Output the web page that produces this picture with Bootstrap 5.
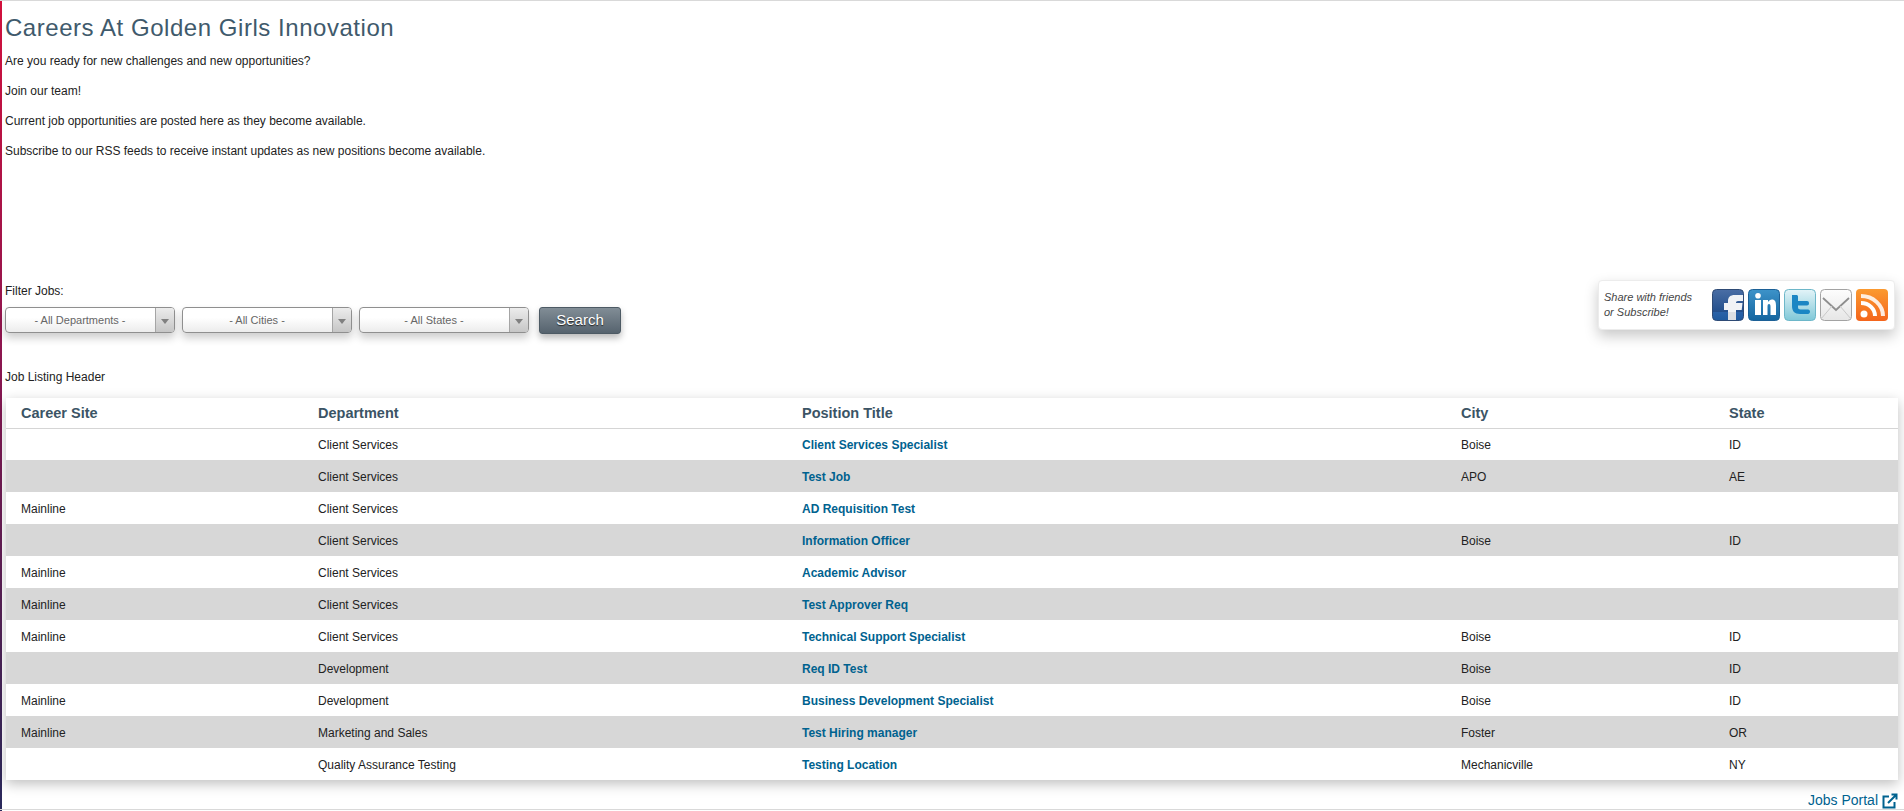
<!DOCTYPE html>
<html lang="en">
<head>
  <meta charset="UTF-8">
  <title>Careers At Golden Girls Innovation</title>
  <link rel="stylesheet" href="https://cdn.jsdelivr.net/npm/bootstrap@5.3.3/dist/css/bootstrap.min.css">
  <style>
    html, body { height: 100%; }
    body {
      font-family: "Liberation Sans", Arial, sans-serif;
      font-size: 12px;
      line-height: 15px;
      color: #222;
      background: #fff;
      overflow: hidden;
    }
    .page-frame {
      height: 811px;
      padding: 1px 5px 0 7px;
      border-top: 1px solid #d9d9d9;
      background: linear-gradient(#d2103c, #8a1650 45%, #2a2a5c) no-repeat left top / 2px 100%;
      position: relative;
    }
    .page-title {
      font-size: 24px;
      line-height: 30px;
      font-weight: 400;
      color: #3f5a6c;
      letter-spacing: .54px;
      margin: 11px 0 0 -2px;
    }
    .intro { margin: 11px 0 0 -2px; }
    .intro p { margin: 0 0 15px; }
    .filter-area { margin: 121px 0 0 -2px; height: 54px; }
    .filter-label { margin: 4px 0 8px; line-height: 15px; }
    .drop {
      width: 170px;
      height: 26px;
      border: 1px solid #8f8f8f;
      border-radius: 4px;
      background: linear-gradient(#fff 40%, #ececec);
      box-shadow: 0 5px 9px rgba(0, 0, 0, .2);
      color: #666;
      font-size: 11px;
    }
    .drop-text { flex: 1; text-align: center; padding-right: 1px; }
    .drop-arrow {
      width: 19px;
      border-left: 1px solid #a5a5a5;
      background: linear-gradient(#ececec, #c6c6c6);
      border-radius: 0 3px 3px 0;
    }
    .drop-arrow::after {
      content: "";
      border-left: 4px solid transparent;
      border-right: 4px solid transparent;
      border-top: 5px solid #808080;
      margin-top: 2px;
    }
    .drop-gap { gap: 7px; }
    .search-btn {
      width: 82px;
      height: 27px;
      margin-left: 3px;
      padding: 0;
      border: 1px solid #4d5a64;
      border-radius: 3px;
      background: linear-gradient(#818d96, #56636e);
      box-shadow: 0 4px 7px rgba(0, 0, 0, .28);
      color: #fff;
      font-size: 15px;
      text-shadow: 0 1px 1px #222;
    }
    .share-box {
      width: 297px;
      height: 50px;
      margin-right: 4px;
      padding-left: 5px;
      padding-right: 6px;
      background: #fff;
      border: 1px solid #ececec;
      border-radius: 4px;
      box-shadow: 0 6px 14px rgba(0, 0, 0, .22);
    }
    .share-text { font-size: 11px; line-height: 15px; font-style: italic; color: #444; }
    .share-icons { gap: 4px; }
    .share-icons svg { display: block; }
    .listing-head { margin: 36px 0 13px -2px; line-height: 15px; }
    .job-wrap {
      margin-left: -1px;
      width: 1892px;
      box-shadow: 0 4px 12px rgba(0, 0, 0, .25);
    }
    .job-table {
      table-layout: fixed;
      margin: 0;
      color: #222;
      font-size: 12px;
      --bs-table-bg: transparent;
    }
    .job-table th, .job-table td { padding: 2px 16px 0; border: 0; vertical-align: middle; }
    .job-table th:first-child, .job-table td:first-child { padding-left: 15px; }
    .job-table thead th {
      height: 30px;
      font-size: 14.5px;
      font-weight: 700;
      color: #3b5465;
      border-bottom: 1px solid #d5d5d5;
    }
    .job-table tbody td { height: 32px; }
    .job-table tbody tr:nth-child(even) td { background: #d7d7d7; }
    .job-table a { color: #00628f; font-weight: 700; text-decoration: none; }
    .col-site { width: 296px; }
    .col-dept { width: 484px; }
    .col-title { width: 659px; }
    .col-city { width: 268px; }
    .portal-row { height: 41px; padding-right: 1px; }
    .portal-link { color: #00628f; font-size: 14px; text-decoration: none; gap: 4px; }
    .foot-rule {
      position: absolute;
      left: 0; right: 0;
      top: 808px;
      border-top: 1px solid #d9d9d9;
    }
  </style>
</head>
<body>
  <div class="page-frame">
    <h1 class="page-title">Careers At Golden Girls Innovation</h1>
    <div class="intro">
      <p>Are you ready for new challenges and new opportunities?</p>
      <p>Join our team!</p>
      <p>Current job opportunities are posted here as they become available.</p>
      <p>Subscribe to our RSS feeds to receive instant updates as new positions become available.</p>
    </div>

    <div class="filter-area d-flex justify-content-between">
      <div>
        <div class="filter-label">Filter Jobs:</div>
        <div class="d-flex align-items-start drop-gap">
          <div class="drop d-flex align-items-stretch"><span class="drop-text d-flex align-items-center justify-content-center">- All Departments -</span><span class="drop-arrow d-flex align-items-center justify-content-center"></span></div>
          <div class="drop d-flex align-items-stretch"><span class="drop-text d-flex align-items-center justify-content-center">- All Cities -</span><span class="drop-arrow d-flex align-items-center justify-content-center"></span></div>
          <div class="drop d-flex align-items-stretch"><span class="drop-text d-flex align-items-center justify-content-center">- All States -</span><span class="drop-arrow d-flex align-items-center justify-content-center"></span></div>
          <button type="button" class="btn search-btn">Search</button>
        </div>
      </div>

      <div class="share-box d-flex align-items-center justify-content-between">
        <div class="share-text">Share with friends<br>or Subscribe!</div>
        <div class="share-icons d-flex">
          <!-- facebook -->
          <svg width="32" height="32" viewBox="0 0 32 32">
            <defs><linearGradient id="fb" x1="0" y1="0" x2="0" y2="1"><stop offset="0" stop-color="#4a6ea5"/><stop offset=".72" stop-color="#234f8c"/><stop offset=".73" stop-color="#2a62a8"/><stop offset="1" stop-color="#1f5a9e"/></linearGradient></defs>
            <rect x=".5" y=".5" width="31" height="31" rx="4" fill="url(#fb)" stroke="#2e4a75"/>
            <path d="M16 31V21h-4v-7h4v-2c0-4 2.500-6 6.500-6H31v6h-5c-1.500 0-2 .7-2 2h6.500l-.8 7H24v10z" fill="#f1f3f6"/>
            <rect x="16" y="23" width="8" height="8" fill="#dcdfe4"/>
          </svg>
          <!-- linkedin -->
          <svg width="32" height="32" viewBox="0 0 32 32">
            <defs><linearGradient id="li" x1="0" y1="0" x2="0" y2="1"><stop offset="0" stop-color="#3d93c9"/><stop offset="1" stop-color="#14659f"/></linearGradient></defs>
            <rect x=".5" y=".5" width="31" height="31" rx="4" fill="url(#li)" stroke="#1c6096"/>
            <circle cx="10" cy="6.800" r="2.800" fill="#fff"/>
            <rect x="7" y="11" width="6" height="15" fill="#fff"/>
            <path d="M15 11h5v2c1-1.500 2.300-2.400 4-2.400 3 0 4 2.200 4 6V26h-5.500v-8c0-1.800-.3-2.900-1.500-2.900s-1.500 1.100-1.500 2.900V26H15z" fill="#fff"/>
          </svg>
          <!-- twitter -->
          <svg width="32" height="32" viewBox="0 0 32 32">
            <defs><linearGradient id="tw" x1="0" y1="0" x2="0" y2="1"><stop offset="0" stop-color="#e3f4f8"/><stop offset="1" stop-color="#80c8d8"/></linearGradient></defs>
            <rect x=".5" y=".5" width="31" height="31" rx="4" fill="url(#tw)" stroke="#6db7c9"/>
            <path d="M8 6h4.500c.8 0 1.500.7 1.500 1.500V12h9c1.200 0 2 .9 2 2.200s-.8 2.300-2 2.300h-9V18c0 1.800 1 2.500 2.500 2.500H24c1.200 0 2 1 2 2.200S25.200 25 24 25h-8C10.500 25 8 22 8 17z" fill="#1b86c4"/>
          </svg>
          <!-- mail -->
          <svg width="32" height="32" viewBox="0 0 32 32">
            <defs><linearGradient id="ml" x1="0" y1="0" x2="0" y2="1"><stop offset="0" stop-color="#fdfdfd"/><stop offset="1" stop-color="#e6e6e6"/></linearGradient></defs>
            <rect x=".5" y=".5" width="31" height="31" rx="4" fill="url(#ml)" stroke="#a3a3a3"/>
            <path d="M3 9l13 12L29 9" fill="none" stroke="#8e8e8e" stroke-width="1.800"/>
            <path d="M1 30l11-13M31 30L20 17" fill="none" stroke="#c9c9c9"/>
          </svg>
          <!-- rss -->
          <svg width="32" height="32" viewBox="0 0 32 32">
            <defs><linearGradient id="rs" x1="0" y1="0" x2="0" y2="1"><stop offset="0" stop-color="#fb9a30"/><stop offset="1" stop-color="#f4651c"/></linearGradient></defs>
            <rect width="32" height="32" rx="4" fill="url(#rs)"/>
            <circle cx="8" cy="25" r="3.500" fill="#fff"/>
            <path d="M5 14c8 0 14 6 14 13" fill="none" stroke="#fff" stroke-width="4"/>
            <path d="M5 7c12 0 22 9 22 20" fill="none" stroke="#fff" stroke-width="4" opacity=".85"/>
          </svg>
        </div>
      </div>
    </div>

    <div class="listing-head">Job Listing Header</div>

    <div class="job-wrap">
      <table class="table job-table">
        <thead>
          <tr>
            <th class="col-site">Career Site</th>
            <th class="col-dept">Department</th>
            <th class="col-title">Position Title</th>
            <th class="col-city">City</th>
            <th>State</th>
          </tr>
        </thead>
        <tbody id="jobs"></tbody>
      </table>
    </div>

    <div class="portal-row d-flex justify-content-end align-items-center">
      <a href="#" class="portal-link d-flex align-items-center">Jobs Portal
        <svg width="16" height="16" viewBox="0 0 16 16" fill="none" stroke="#00628f" stroke-width="2">
          <path d="M12.500 9v5.500H1.500V3.500H7"/>
          <path d="M6 10l8-8M9.500 1.500h5v5"/>
        </svg>
      </a>
    </div>
    <div class="foot-rule"></div>
  </div>

  <script>
    const jobs = [
      ['', 'Client Services', 'Client Services Specialist', 'Boise', 'ID'],
      ['', 'Client Services', 'Test Job', 'APO', 'AE'],
      ['Mainline', 'Client Services', 'AD Requisition Test', '', ''],
      ['', 'Client Services', 'Information Officer', 'Boise', 'ID'],
      ['Mainline', 'Client Services', 'Academic Advisor', '', ''],
      ['Mainline', 'Client Services', 'Test Approver Req', '', ''],
      ['Mainline', 'Client Services', 'Technical Support Specialist', 'Boise', 'ID'],
      ['', 'Development', 'Req ID Test', 'Boise', 'ID'],
      ['Mainline', 'Development', 'Business Development Specialist', 'Boise', 'ID'],
      ['Mainline', 'Marketing and Sales', 'Test Hiring manager', 'Foster', 'OR'],
      ['', 'Quality Assurance Testing', 'Testing Location', 'Mechanicville', 'NY']
    ];
    document.getElementById('jobs').innerHTML = jobs.map(j => `
      <tr>
        <td>${j[0]}</td>
        <td>${j[1]}</td>
        <td><a href="#">${j[2]}</a></td>
        <td>${j[3]}</td>
        <td>${j[4]}</td>
      </tr>
    `).join('');
  </script>
  <script src="https://cdn.jsdelivr.net/npm/bootstrap@5.3.3/dist/js/bootstrap.bundle.min.js"></script>
</body>
</html>
